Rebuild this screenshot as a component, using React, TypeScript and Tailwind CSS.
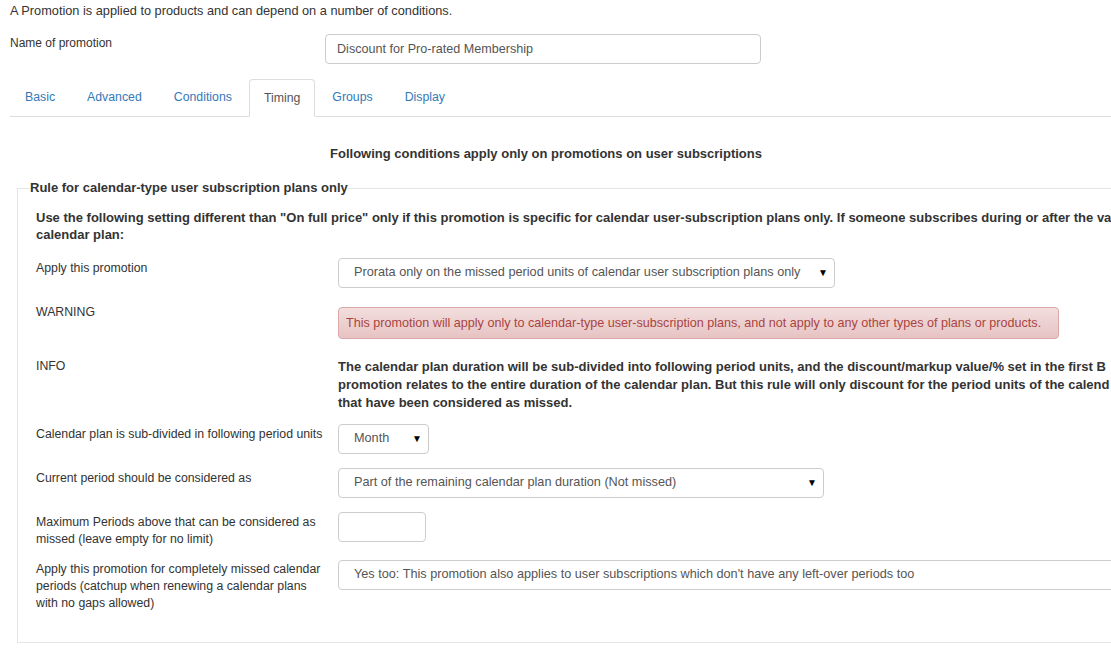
import React from 'react';

const tabs = ['Basic', 'Advanced', 'Conditions', 'Timing', 'Groups', 'Display'];

function Select({ value, className }: { value: string; className: string }) {
  return (
    <div
      className={`h-[30px] shrink-0 border border-[#ccc] rounded-[4px] bg-white pl-[15px] pr-[6px] flex items-center justify-between text-[12.7px] text-[#555] ${className}`}
    >
      <span className="whitespace-nowrap">{value}</span>
      <span className="text-[10px] text-black leading-none">▼</span>
    </div>
  );
}

function Row({ label, children, className = '' }: { label: React.ReactNode; children: React.ReactNode; className?: string }) {
  return (
    <div className={`flex items-start ${className}`}>
      <div className="w-[302px] shrink-0 pr-[8px] pt-[2px] text-[12.3px] leading-[17px] text-[#333]">{label}</div>
      {children}
    </div>
  );
}

export default function App() {
  return (
    <div className="w-[1111px] h-[670px] overflow-hidden bg-white font-['Liberation_Sans',Arial,sans-serif] text-[#333]">
      <div className="pl-[10px]">
        <p className="pt-[2px] text-[12.75px] leading-[18px] whitespace-nowrap">
          A Promotion is applied to products and can depend on a number of conditions.
        </p>

        <div className="mt-[14px] flex items-start">
          <div className="w-[315px] shrink-0 text-[12px] leading-[18px]">Name of promotion</div>
          <div className="w-[436px] h-[30px] border border-[#ccc] rounded-[4px] px-[11px] flex items-center text-[12.6px] text-[#555]">
            Discount for Pro-rated Membership
          </div>
        </div>

        <ul className="mt-[15px] flex border-b border-[#ddd] h-[38px]">
          {tabs.map((t) => (
            <li
              key={t}
              className={
                t === 'Timing'
                  ? 'mr-[2px] h-[38px] pt-[1px] px-[14px] flex items-center text-[12.3px] text-[#555] bg-white border border-[#ddd] border-b-white rounded-t-[4px]'
                  : 'mr-[2px] h-[37px] px-[14px] flex items-center text-[12.3px] text-[#337ab7] border border-transparent'
              }
            >
              {t}
            </li>
          ))}
        </ul>

        <div className="w-[1072px] mt-[28px] text-center font-bold text-[13px] leading-[18px]">
          Following conditions apply only on promotions on user subscriptions
        </div>

        <fieldset className="ml-[7px] mt-[16px] w-[1400px] border border-[#e5e5e5] pl-[12px] pb-[30px]">
          <legend className="px-0 font-bold text-[13px] leading-[18px] text-[#333]">
            Rule for calendar-type user subscription plans only
          </legend>
          <div className="pl-[6px] pt-[12px]">
            <p className="w-[1300px] font-bold text-[13px] leading-[17px]">
              Use the following setting different than "On full price" only if this promotion is specific for calendar user-subscription plans only. If someone subscribes during or after the va
              <br />
              calendar plan:
            </p>

            <Row label="Apply this promotion" className="mt-[15px]">
              <Select className="w-[497px]" value="Prorata only on the missed period units of calendar user subscription plans only" />
            </Row>

            <Row label="WARNING" className="mt-[14px]">
              <div className="mt-[5px] w-[721px] h-[32px] shrink-0 border border-[#dca7a7] rounded-[4px] bg-gradient-to-b from-[#f2dede] to-[#e7c3c3] px-[7px] flex items-center text-[12.6px] text-[#a94442] whitespace-nowrap">
                This promotion will apply only to calendar-type user-subscription plans, and not apply to any other types of plans or products.
              </div>
            </Row>

            <Row label="INFO" className="mt-[17px]">
              <p className="mt-[2px] w-[900px] shrink-0 font-bold text-[13px] leading-[18px] text-[#333]">
                The calendar plan duration will be sub-divided into following period units, and the discount/markup value/% set in the first B
                <br />
                promotion relates to the entire duration of the calendar plan. But this rule will only discount for the period units of the calend
                <br />
                that have been considered as missed.
              </p>
            </Row>

            <Row label="Calendar plan is sub-divided in following period units" className="mt-[12px]">
              <Select className="w-[91px]" value="Month" />
            </Row>

            <Row label="Current period should be considered as" className="mt-[14px]">
              <Select className="w-[486px]" value="Part of the remaining calendar plan duration (Not missed)" />
            </Row>

            <Row label="Maximum Periods above that can be considered as missed (leave empty for no limit)" className="mt-[14px]">
              <div className="w-[88px] h-[30px] shrink-0 border border-[#ccc] rounded-[4px] bg-white" />
            </Row>

            <Row
              label="Apply this promotion for completely missed calendar periods (catchup when renewing a calendar plans with no gaps allowed)"
              className="mt-[11px]"
            >
              <div className="mt-[1px] w-[900px] h-[30px] shrink-0 border border-[#ccc] rounded-[4px] bg-white pl-[15px] flex items-center text-[12.7px] text-[#555] whitespace-nowrap">
                Yes too: This promotion also applies to user subscriptions which don't have any left-over periods too
              </div>
            </Row>
          </div>
        </fieldset>
      </div>
    </div>
  );
}
